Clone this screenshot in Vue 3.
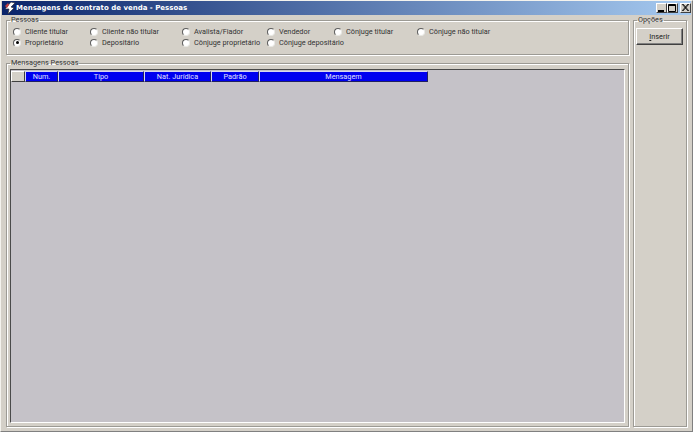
<script setup>
const row1 = [
  { label: 'Cliente titular' },
  { label: 'Cliente não titular' },
  { label: 'Avalista/Fiador' },
  { label: 'Vendedor' },
  { label: 'Cônjuge titular' },
  { label: 'Cônjuge não titular' }
]
const row2 = [
  { label: 'Proprietário', checked: true },
  { label: 'Depositário' },
  { label: 'Cônjuge proprietário' },
  { label: 'Cônjuge depositário' }
]
const radios = [...row1, ...row2]
const columns = [
  { label: 'Num.', w: 33 },
  { label: 'Tipo', w: 86 },
  { label: 'Nat. Jurídica', w: 67 },
  { label: 'Padrão', w: 48 },
  { label: 'Mensagem', w: 169 }
]
</script>

<template>
  <div class="window">
    <div class="titlebar">
      <svg class="appicon" width="12" height="12" viewBox="0 0 12 12">
        <path d="M7 0 L11 1 L7 5 L10 6 L4 12 L5 7 L1 7 Z" fill="#fff" stroke="#30303a" stroke-width=".7" />
        <path d="M1 4 L4 1 L5 3 L3 6 Z" fill="#c04040" />
      </svg>
      <span class="title">Mensagens de contrato de venda - Pessoas</span>
      <div class="controls">
        <button class="ctl"><svg width="9" height="8"><rect x="1" y="6" width="6" height="2" fill="#000" /></svg></button>
        <button class="ctl"><svg width="9" height="8"><path d="M.5 .5h7v7h-7z M.5 1.5h7" fill="none" stroke="#000" /></svg></button>
        <button class="ctl close"><svg width="9" height="8"><path d="M1 0l6 7M7 0l-6 7M2 0l6 7M8 0l-6 7" stroke="#000" stroke-width=".8" /></svg></button>
      </div>
    </div>
    <div class="body">
      <div class="left">
        <fieldset class="group pessoas">
          <legend>Pessoas</legend>
          <div class="radios">
            <label v-for="r in radios" :key="r.label" class="radio">
              <span class="dot" :class="{ on: r.checked }"></span>
              <span>{{ r.label }}</span>
            </label>
          </div>
        </fieldset>
        <fieldset class="group mensagens">
          <legend>Mensagens Pessoas</legend>
          <div class="grid">
            <div class="head">
              <div class="corner"></div>
              <div v-for="c in columns" :key="c.label" class="col" :style="{ width: c.w + 'px' }">{{ c.label }}</div>
            </div>
          </div>
        </fieldset>
      </div>
      <fieldset class="group opcoes">
        <legend>Opções</legend>
        <button class="btn"><u>I</u>nserir</button>
      </fieldset>
    </div>
  </div>
</template>

<style>
html, body { margin: 0; background: #d4d0c8; }
</style>

<style scoped>
.window {
  width: 693px;
  height: 432px;
  box-sizing: border-box;
  background: #d4d0c8;
  border-top: 1px solid #f4f3ee;
  border-left: 1px solid #f4f3ee;
  border-right: 1px solid #808080;
  border-bottom: 1px solid #808080;
  padding: 0 1px 1px;
  display: flex;
  flex-direction: column;
  font-family: Roboto, "Liberation Sans", sans-serif;
  font-size: 7.3px;
  color: #333;
  overflow: hidden;
}
.titlebar {
  height: 14px;
  flex: none;
  display: flex;
  align-items: center;
  padding-left: 2px;
  background: linear-gradient(90deg, #0a246a, #a6caf0);
  color: #fff;
}
.appicon { flex: none; }
.title {
  font-family: "DejaVu Sans", sans-serif;
  font-size: 7px;
  font-weight: 700;
}
.controls { margin-left: auto; display: flex; }
.ctl {
  width: 11px;
  height: 10px;
  padding: 0;
  border: 1px solid;
  border-color: #fff #404040 #404040 #fff;
  background: #d4d0c8;
  display: flex;
  align-items: center;
  justify-content: center;
}
.close { margin-left: 2px; }
.body {
  flex: 1;
  min-height: 0;
  display: flex;
  padding: 1px 4px 3px 4px;
  gap: 4px;
}
.left {
  width: 623px;
  flex: none;
  display: flex;
  flex-direction: column;
  gap: 4px;
}
.group {
  margin: 0;
  min-width: 0;
  box-sizing: border-box;
  border: 1px solid #9c9a94;
  box-shadow: 1px 1px 0 #fff, inset 1px 1px 0 #fff;
  padding: 0;
}
legend {
  margin-left: 3px;
  padding: 0 1px;
  line-height: 8px;
  font-size: 7.3px;
}
.pessoas { height: 39px; flex: none; }
.radios {
  display: grid;
  grid-template-columns: 77px 92px 85px 67px 83px 90px;
  grid-auto-rows: 11px;
  padding: 2px 0 0 6px;
}
.radio {
  display: flex;
  align-items: center;
  gap: 4px;
  white-space: nowrap;
}
.dot {
  width: 6px;
  height: 6px;
  flex: none;
  border-radius: 50%;
  background: #fff;
  border: 1px solid;
  border-color: #5c5c5c #e8e8e4 #e8e8e4 #5c5c5c;
  display: flex;
  align-items: center;
  justify-content: center;
}
.dot.on::after {
  content: "";
  width: 3px;
  height: 3px;
  border-radius: 50%;
  background: #000;
}
.mensagens {
  flex: 1;
  min-height: 0;
  display: flex;
  padding: 2px 3px 3px;
}
.mensagens legend { margin-left: 0; }
.grid {
  flex: 1;
  box-sizing: border-box;
  background: #c5c2c8;
  border: 1px solid;
  border-color: #4a4a4a #fff #fff #4a4a4a;
  padding-top: 1px;
}
.head { display: flex; height: 11px; }
.corner {
  width: 14px;
  flex: none;
  box-sizing: border-box;
  background: #d4d0c8;
  border: 1px solid;
  border-color: #fff #404040 #404040 #fff;
}
.col {
  flex: none;
  box-sizing: border-box;
  background: #0000f0;
  color: #e0e0ff;
  text-align: center;
  line-height: 9px;
  border: 1px solid;
  border-color: #d8d8f0 #202060 #202060 #d8d8f0;
}
.opcoes {
  width: 54px;
  flex: none;
  padding: 4px 2px;
}
.opcoes legend { margin-left: 1px; }
.btn {
  display: block;
  width: 47px;
  height: 17px;
  padding: 0;
  font: inherit;
  color: #222;
  background: #d4d0c8;
  border: 1px solid;
  border-color: #fff #404040 #404040 #fff;
  box-shadow: inset -1px -1px 0 #808080;
}
</style>
